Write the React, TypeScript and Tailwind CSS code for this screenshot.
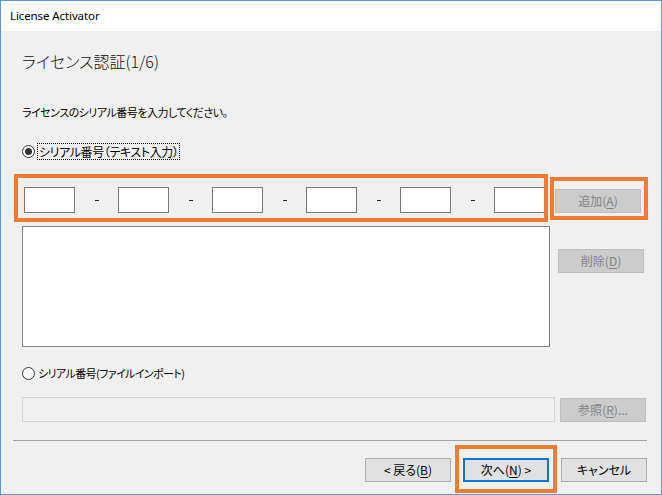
import React from 'react'

const JP = "font-['Meiryo_UI','Noto_Sans_CJK_JP',sans-serif] [font-feature-settings:'palt']"

function Btn({
  label,
  ul,
  suffix = '',
  prefix = '',
  disabled = false,
  primary = false,
  className = '',
}: {
  label: string
  ul?: string
  suffix?: string
  prefix?: string
  disabled?: boolean
  primary?: boolean
  className?: string
}) {
  return (
    <div
      className={`flex h-[24px] w-[86px] shrink-0 items-center justify-center text-[12px] ${JP} ${
        disabled
          ? 'border border-[#bfbfbf] bg-[#cccccc] text-[#838383]'
          : primary
            ? 'border-2 border-[#0078d7] bg-[#e1e1e1] text-black'
            : 'border border-[#adadad] bg-[#e1e1e1] text-black'
      } ${className}`}
    >
      <span>
        {prefix}
        {label}
        {ul && (
          <>
            (<span className="underline underline-offset-2">{ul}</span>)
          </>
        )}
        {suffix}
      </span>
    </div>
  )
}

function Radio({ checked }: { checked?: boolean }) {
  return (
    <span className="flex h-[13px] w-[13px] shrink-0 items-center justify-center rounded-full border border-[#333333] bg-white">
      {checked && <span className="h-[7px] w-[7px] rounded-full bg-[#333333]" />}
    </span>
  )
}

export default function App() {
  const serials = [0, 1, 2, 3, 4, 5]

  return (
    <div className="flex h-[495px] w-[662px] flex-col overflow-hidden border border-[#5a9ad8] bg-[#f0f0f0]">
      {/* title bar */}
      <div className="flex h-[30px] shrink-0 items-center bg-white pl-[9px] font-['Noto_Sans',sans-serif] text-[11.5px] tracking-[-0.1px] text-black">
        License Activator
      </div>

      <div className="flex flex-1 flex-col">
        <div className={`ml-[21px] mt-[19px] h-[22px] text-[16px] font-light leading-[22px] text-[#111111] ${JP}`}>
          ライセンス認証(1/6)
        </div>

        <div className={`ml-[21px] mt-[31px] h-[18px] text-[11px] leading-[18px] tracking-[-0.5px] text-black ${JP}`}>
          ライセンスのシリアル番号を入力してください。
        </div>

        <div className="ml-[21px] mt-[21px] flex h-[18px] items-center gap-[2px]">
          <Radio checked />
          <span className={`border border-dotted border-black px-[1px] text-[12px] leading-[15px] tracking-[-0.4px] text-black ${JP}`}>
            シリアル番号（テキスト入力）
          </span>
        </div>

        {/* serial inputs */}
        <div className="ml-[13px] mt-[14px] flex items-start gap-[2px]">
          <div className="flex h-[48px] w-[534px] items-start overflow-hidden border-4 border-[#ed7d31] pl-[6px] pt-[9px]">
            {serials.map((i) => (
              <React.Fragment key={i}>
                {i > 0 && (
                  <span className="flex h-[26px] w-[43px] shrink-0 items-center justify-center">
                    <span className="h-[1px] w-[4px] bg-[#222222]" />
                  </span>
                )}
                <div className="h-[26px] w-[51px] shrink-0 border border-[#7a7a7a] bg-white" />
              </React.Fragment>
            ))}
          </div>
          <div className="mt-[3px] h-[43px] w-[98px] border-4 border-[#ed7d31] pl-[1px] pt-[8px]">
            <Btn label="追加" ul="A" disabled />
          </div>
        </div>

        {/* list */}
        <div className="ml-[21px] mt-[4px] flex items-start gap-[8px]">
          <div className="h-[121px] w-[528px] border border-[#828282] bg-white" />
          <Btn label="削除" ul="D" disabled className="mt-[23px]" />
        </div>

        <div className="ml-[21px] mt-[17px] flex h-[18px] items-center gap-[3px]">
          <Radio />
          <span className={`text-[11px] leading-[15px] tracking-[-0.6px] text-black ${JP}`}>
            シリアル番号(ファイルインポート)
          </span>
        </div>

        <div className="ml-[21px] mt-[15px] flex items-start gap-[5px]">
          <div className="h-[25px] w-[533px] border border-[#d4d4d4] bg-[#f0f0f0]" />
          <Btn label="参照" ul="R" suffix="..." disabled className="mt-[1px]" />
        </div>

        <div className="ml-[12px] mt-[18px] h-[1px] w-[634px] bg-[#a0a0a0]" />

        <div className="mt-[4px] flex items-start justify-end gap-[4px] pr-[14px]">
          <Btn label="戻る" ul="B" prefix="< " className="mt-[13px]" />
          <div className="h-[48px] w-[102px] border-4 border-[#ed7d31] pl-[4px] pt-[9px]">
            <Btn label="次へ" ul="N" suffix=" >" primary />
          </div>
          <Btn label="キャンセル" className="mt-[13px]" />
        </div>
      </div>
    </div>
  )
}
